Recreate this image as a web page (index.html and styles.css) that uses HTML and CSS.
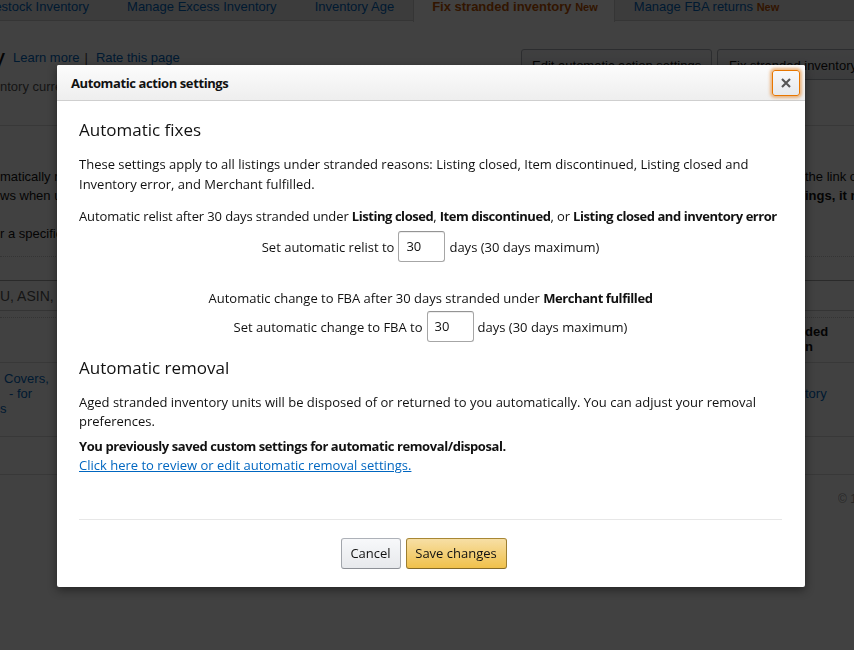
FILE: index.html
```html
<!DOCTYPE html>
<html>
<head>
<meta charset="utf-8">
<link rel="stylesheet" href="styles.css">
</head>
<body>
<div class="page">
  <div class="tabs">
    <div class="tab">Restock Inventory</div>
    <div class="tab">Manage Excess Inventory</div>
    <div class="tab">Inventory Age</div>
    <div class="tab active">Fix stranded inventory <span class="new">New</span></div>
    <div class="tab">Manage FBA returns <span class="new">New</span></div>
  </div>
  <div class="titlebar">
    <span class="title">y</span>
    <a class="plink">Learn more</a><span class="sep">|</span><a class="plink">Rate this page</a>
    <div class="actions">
      <span class="pbtn">Edit automatic action settings</span>
      <span class="pbtn">Fix stranded inventory</span>
    </div>
  </div>
  <div class="subtitle">ntory currently stranded</div>
  <div class="rule"></div>
  <div class="notes">
    <div class="nrow"><span>matically relisted</span><span class="right">the link on</span></div>
    <div class="nrow"><span>ws when updated</span><span class="right bold">ings, it may</span></div>
    <div class="nrow gap"><span>r a specific listing</span></div>
  </div>
  <div class="rule dotted r1"></div>
  <div class="search"><span>U, ASIN, or title</span></div>
  <div class="rule dotted r2"></div>
  <div class="thead"><span class="right bold">ded<br>n</span></div>
  <div class="trow">
    <span class="plink item"><span class="i1">Covers,</span><br><span class="i2">- for</span><br>s</span>
    <span class="right plink"><br>tory</span>
  </div>
  <div class="trow2"></div>
  <div class="foot"><span class="copy">© 1999</span></div>
</div>

<div class="overlay"></div>

<div class="modal">
  <div class="mhead">
    <span class="mtitle">Automatic action settings</span>
    <span class="close"><svg width="10" height="10" viewBox="0 0 10 10"><path d="M1 1 L9 9 M9 1 L1 9" stroke="#555" stroke-width="2.1" stroke-linecap="butt" fill="none"/></svg></span>
  </div>
  <div class="mbody">
    <h2 class="h">Automatic fixes</h2>
    <p class="p1">These settings apply to all listings under stranded reasons: Listing closed, Item discontinued, Listing closed and Inventory error, and Merchant fulfilled.</p>
    <p class="p2">Automatic relist after 30 days stranded under <b>Listing closed</b>, <b>Item discontinued</b>, or <b>Listing closed and inventory error</b></p>
    <div class="setrow">Set automatic relist to <span class="field">30</span> days (30 days maximum)</div>
    <p class="p3">Automatic change to FBA after 30 days stranded under <b>Merchant fulfilled</b></p>
    <div class="setrow fba">Set automatic change to FBA to <span class="field">30</span> days (30 days maximum)</div>
    <h2 class="h h2">Automatic removal</h2>
    <p class="p4">Aged stranded inventory units will be disposed of or returned to you automatically. You can adjust your removal preferences.</p>
    <p class="p5"><b>You previously saved custom settings for automatic removal/disposal.</b><br><a class="mlink">Click here to review or edit automatic removal settings.</a></p>
    <div class="mfoot">
      <span class="btn cancel">Cancel</span>
      <span class="btn save">Save changes</span>
    </div>
  </div>
</div>
</body>
</html>
```
FILE: styles.css
```css
html, body {
  margin: 0;
  padding: 0;
}
body {
  width: 854px;
  height: 650px;
  overflow: hidden;
  background: #fff;
  font-family: "Liberation Sans", Arial, sans-serif;
  font-size: 13px;
  color: #111;
}
.page {
  width: 854px;
}
.tabs {
  display: flex;
  margin-top: -14px;
  margin-left: -34px;
  height: 35px;
  background: #ececec;
  border-bottom: 1px solid #d0d0d0;
  box-sizing: border-box;
}
.tab {
  padding: 0 19px;
  font-size: 13px;
  line-height: 42px;
  height: 35px;
  color: #0066c0;
  white-space: nowrap;
  box-sizing: border-box;
}
.tab.active {
  background: #fff;
  color: #c45500;
  font-weight: bold;
  padding: 0 16px 0 18px;
  border-left: 1px solid #d0d0d0;
  border-right: 1px solid #d0d0d0;
  height: 36px;
}
.tab .new {
  font-size: 11px;
  color: #c45500;
  font-weight: bold;
}
.titlebar {
  display: flex;
  align-items: flex-start;
  height: 58px;
  padding-top: 27px;
  box-sizing: border-box;
  background: #fff;
}
.title {
  font-size: 26px;
  line-height: 20px;
  margin-left: -8px;
  margin-right: 8px;
}
.plink {
  color: #0066c0;
  font-size: 13px;
  line-height: 20px;
}
.sep {
  font-size: 13px;
  line-height: 20px;
  margin: 0 8px 0 5px;
  color: #444;
}
.actions {
  margin-left: auto;
  display: flex;
  gap: 5px;
  margin-top: 1px;
  margin-right: -15px;
}
.pbtn {
  border: 1px solid #adb1b8;
  border-radius: 3px;
  background: linear-gradient(#f7f8fa, #e7e9ec);
  height: 31px;
  line-height: 31px;
  padding: 0 11px;
  font-size: 13px;
  white-space: nowrap;
  box-sizing: border-box;
}
.pbtn:first-child {
  width: 191px;
  text-align: center;
  padding: 0;
}
.subtitle {
  line-height: 16px;
  color: #555;
}
.rule {
  margin-top: 30px;
  border-top: 1px solid #ddd;
}
.notes {
  padding-top: 41px;
}
.nrow {
  display: flex;
  line-height: 19px;
  white-space: nowrap;
}
.nrow.gap {
  margin-top: 19px;
}
.right {
  margin-left: auto;
  width: 49px;
  overflow: hidden;
  white-space: nowrap;
}
.bold {
  font-weight: bold;
}
.rule.r1 {
  margin-top: 13px;
  border-top: 1px dotted #ccc;
}
.search {
  margin-top: 23px;
  height: 31px;
  border-top: 1px solid #a6a6a6;
  border-bottom: 1px solid #ccc;
  box-sizing: border-box;
  line-height: 31px;
  font-size: 14px;
  color: #555;
}
.rule.r2 {
  margin-top: 6px;
  border-top: 1px dotted #ccc;
}
.thead {
  display: flex;
  height: 45px;
  padding-top: 6px;
  box-sizing: border-box;
  line-height: 15px;
  border-bottom: 1px solid #ddd;
}
.trow {
  display: flex;
  height: 74px;
  padding-top: 8px;
  box-sizing: border-box;
  line-height: 15px;
  border-bottom: 1px solid #ddd;
}
.item {
  font-size: 13px;
  line-height: 15px;
}
.i1 { margin-left: 4px; }
.i2 { margin-left: 9px; }
.trow .right {
  font-size: 13px;
  line-height: 15px;
}
.trow2 {
  height: 37px;
  border-bottom: 1px solid #ddd;
}
.foot {
  display: flex;
  justify-content: flex-end;
  padding-top: 16px;
  line-height: 16px;
  color: #999;
  font-size: 12px;
}
.copy {
  width: 16px;
  overflow: hidden;
  white-space: nowrap;
}

.overlay {
  position: fixed;
  inset: 0;
  background: rgba(0, 0, 0, 0.745);
}

.modal {
  position: absolute;
  left: 57px;
  top: 65px;
  width: 748px;
  height: 522px;
  background: #fff;
  border-radius: 2px;
  box-shadow: 0 3px 10px rgba(0, 0, 0, 0.45);
  font-family: "Open Sans", "Noto Sans", sans-serif;
  font-size: 13px;
  color: #111;
  overflow: hidden;
}
.modal b {
  letter-spacing: -0.42px;
}
.mhead {
  height: 36px;
  box-sizing: border-box;
  display: flex;
  align-items: center;
  padding: 0 5px 0 14px;
  background: linear-gradient(#fcfcfc, #eeeeee);
  border-bottom: 1px solid #cfcfcf;
}
.mtitle {
  font-weight: bold;
  font-size: 13px;
  letter-spacing: -0.4px;
}
.close {
  margin-left: auto;
  width: 28px;
  height: 26px;
  box-sizing: border-box;
  border: 1px solid #e77600;
  border-radius: 3px;
  background: linear-gradient(#f7f8fa, #e7e9ec);
  box-shadow: 0 0 3px 2px rgba(228, 121, 17, 0.5);
  display: flex;
  align-items: center;
  justify-content: center;
}
.mbody {
  padding: 17px 23px 0 22px;
}
.h {
  margin: 0;
  font-weight: normal;
  font-size: 17px;
  line-height: 24px;
}
p {
  margin: 0;
}
.p1 {
  margin-top: 12px;
  line-height: 20px;
}
.p2 {
  margin-top: 12px;
  line-height: 20px;
  white-space: nowrap;
  letter-spacing: -0.12px;
}
.modal .p2 b {
  letter-spacing: -0.45px;
}
.setrow {
  display: flex;
  justify-content: center;
  align-items: center;
  gap: 4px;
  margin-top: 5px;
}
.setrow.fba {
  margin-top: 3px;
}
.field {
  width: 47px;
  height: 31px;
  box-sizing: border-box;
  border: 1px solid #a6a6a6;
  border-top-color: #949494;
  border-radius: 3px;
  box-shadow: 0 1px 0 rgba(0,0,0,.07) inset;
  padding-left: 7px;
  line-height: 29px;
}
.p3 {
  margin-top: 26px;
  line-height: 20px;
  text-align: center;
}
.setrow + .h2 {
  margin-top: 14px;
}
.p4 {
  margin-top: 13px;
  line-height: 19px;
}
.p5 {
  margin-top: 6px;
  line-height: 19px;
}
.mlink {
  color: #0066c0;
  text-decoration: underline;
}
.mfoot {
  margin-top: 44px;
  border-top: 1px solid #e7e7e7;
  padding-top: 18px;
  display: flex;
  justify-content: center;
  gap: 5px;
  padding-right: 14px;
}
.btn {
  height: 31px;
  box-sizing: border-box;
  border: 1px solid;
  border-radius: 3px;
  line-height: 29px;
  font-size: 13px;
  color: #111;
  text-align: center;
}
.cancel {
  width: 60px;
  border-color: #adb1b8 #a2a6ac #8d9096;
  background: linear-gradient(#f7f8fa, #e7e9ec);
}
.save {
  width: 101px;
  border-color: #a88734 #9c7e31 #846a29;
  background: linear-gradient(#f7dfa5, #f0c14b);
}
```
